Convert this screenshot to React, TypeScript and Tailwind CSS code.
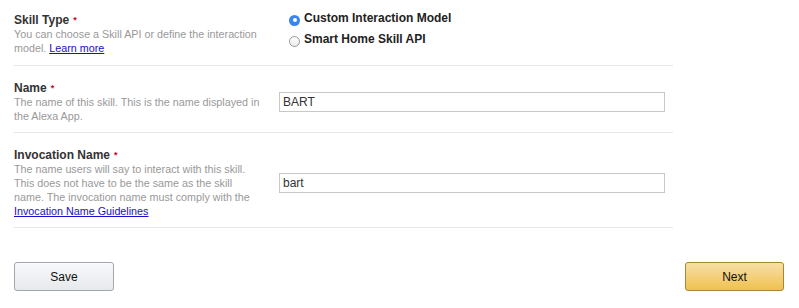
import React, { useState } from "react";

const Req = () => <span className="text-[#d0021b] text-[9px] align-top ml-[4px]">*</span>;

const Radio = ({ checked, label, onClick }: { checked: boolean; label: string; onClick: () => void }) => (
  <label className="flex items-center h-[21px] cursor-pointer" onClick={onClick}>
    {checked ? (
      <span className="mt-[5px] w-[11px] h-[11px] rounded-full bg-[#3a86f0] flex items-center justify-center shrink-0">
        <span className="w-[4px] h-[4px] rounded-full bg-white" />
      </span>
    ) : (
      <span className="mt-[5px] w-[11px] h-[11px] rounded-full border border-[#9a9a9a] bg-gradient-to-b from-white to-[#ececec] shrink-0" />
    )}
    <span className="ml-[4px] text-[12px] font-bold text-[#222]">{label}</span>
  </label>
);

export default function App() {
  const [type, setType] = useState("custom");
  const [name, setName] = useState("BART");
  const [invocation, setInvocation] = useState("bart");

  return (
    <div className="bg-white w-[799px] h-[308px] font-['Liberation_Sans',Arial,sans-serif]">
      <div className="ml-[14px] w-[659px]">
        {/* skill type */}
        <div className="flex items-start pt-[7px] pb-[10px] border-b border-[#e7e7e7]">
          <div className="w-[265px] pr-[15px] pt-[6px]">
            <div className="text-[12px] leading-[14px] font-bold text-[#333]">
              Skill Type<Req />
            </div>
            <p className="text-[10.75px] leading-[14px] text-[#999]">
              You can choose a Skill API or define the interaction model.{" "}
              <a href="#" className="text-[#1a0dcc] underline">Learn more</a>
            </p>
          </div>
          <div className="pl-[10px]">
            <Radio checked={type === "custom"} label="Custom Interaction Model" onClick={() => setType("custom")} />
            <Radio checked={type === "smarthome"} label="Smart Home Skill API" onClick={() => setType("smarthome")} />
          </div>
        </div>

        {/* name */}
        <div className="flex items-center pt-[15px] pb-[9px] border-b border-[#e7e7e7]">
          <div className="w-[265px] pr-[15px]">
            <div className="text-[12px] leading-[14px] font-bold text-[#333]">
              Name<Req />
            </div>
            <p className="text-[10.75px] leading-[14px] text-[#999]">
              The name of this skill. This is the name displayed in the Alexa App.
            </p>
          </div>
          <input
            value={name}
            onChange={(e) => setName(e.target.value)}
            className="w-[386px] h-[20px] border border-[#c8c8c8] px-[3px] text-[12px] text-[#333] outline-none"
          />
        </div>

        {/* invocation name */}
        <div className="flex items-center pt-[15px] pb-[9px] border-b border-[#e7e7e7]">
          <div className="w-[265px] pr-[15px]">
            <div className="text-[12px] leading-[14px] font-bold text-[#333]">
              Invocation Name<Req />
            </div>
            <p className="text-[10.75px] leading-[14px] text-[#999]">
              The name users will say to interact with this skill. This does not have to be the same as the skill name. The invocation name must comply with the{" "}
              <a href="#" className="text-[#1a0dcc] underline">Invocation Name Guidelines</a>
            </p>
          </div>
          <input
            value={invocation}
            onChange={(e) => setInvocation(e.target.value)}
            className="w-[386px] h-[20px] border border-[#c8c8c8] px-[3px] text-[12px] text-[#333] outline-none"
          />
        </div>
      </div>

      <div className="flex justify-between ml-[14px] w-[770px] mt-[34px]">
        <button className="w-[100px] h-[29px] rounded-[3px] border border-[#a2a6ac] bg-gradient-to-b from-[#f7f8fa] to-[#e7e9ec] text-[12px] text-[#111] shadow-[0_1px_0_rgba(255,255,255,0.6)_inset]">
          Save
        </button>
        <button className="w-[99px] h-[29px] rounded-[3px] border border-[#a88734] bg-gradient-to-b from-[#f7dfa5] to-[#f0c14b] text-[12px] text-[#111]">
          Next
        </button>
      </div>
    </div>
  );
}
